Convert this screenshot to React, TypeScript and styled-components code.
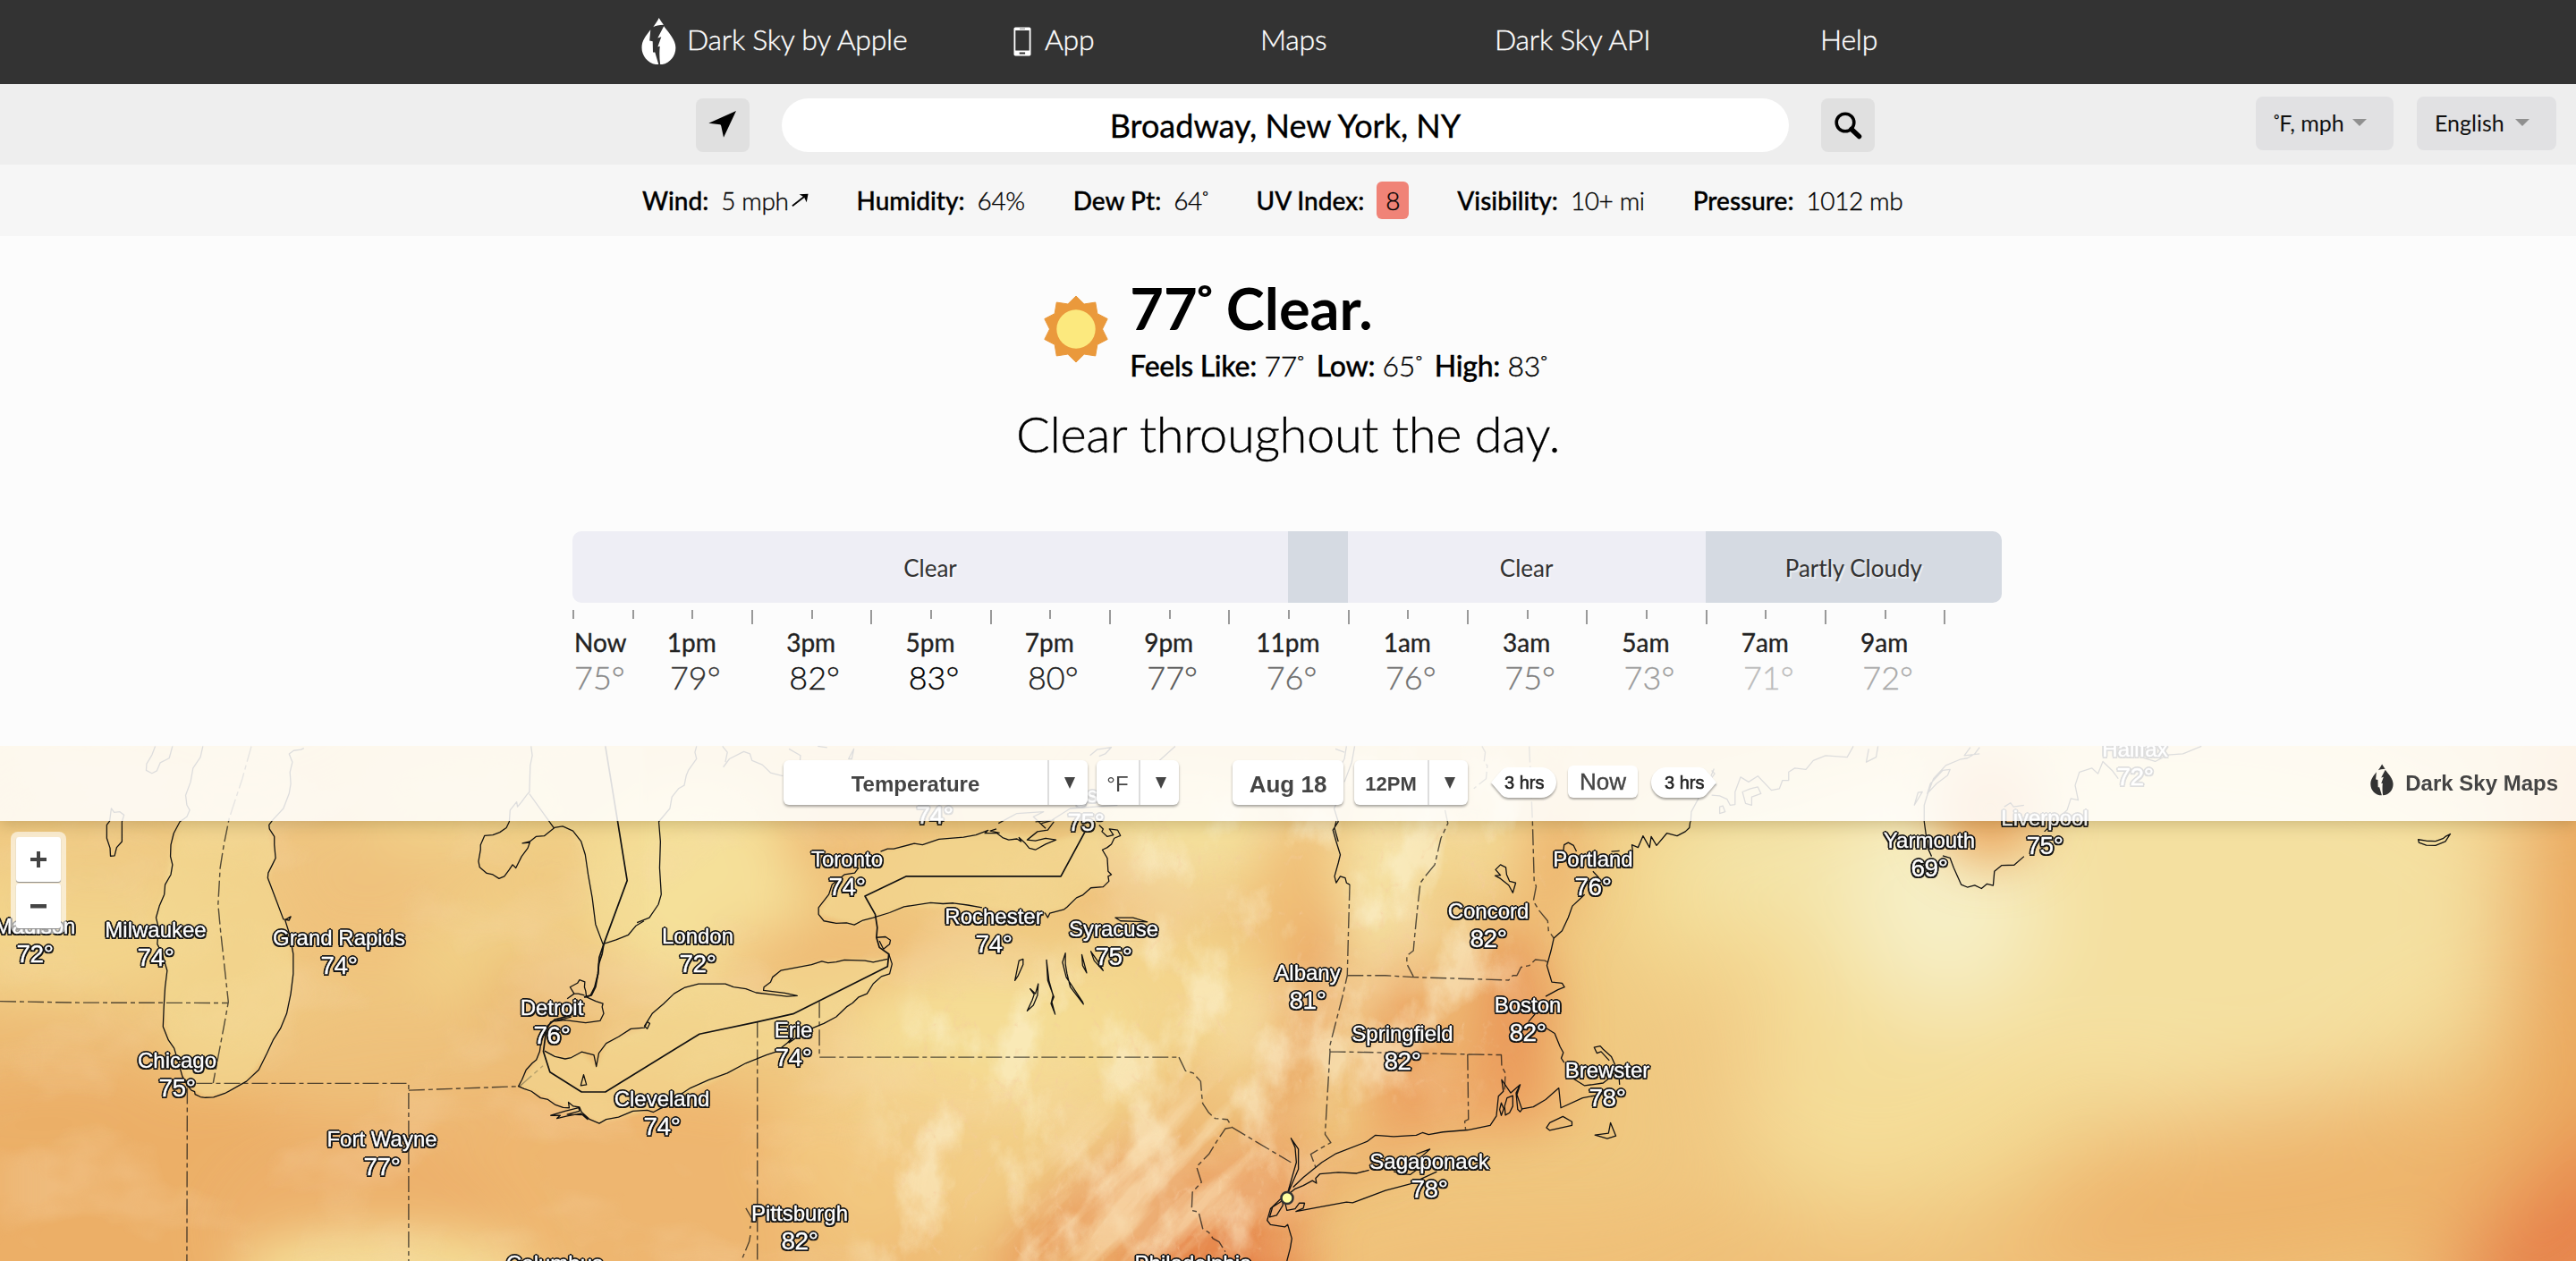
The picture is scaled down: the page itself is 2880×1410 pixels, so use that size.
import React from "react";
import styled, { createGlobalStyle, css } from "styled-components";

const GlobalStyle = createGlobalStyle`
  html, body { margin: 0; padding: 0; }
  body {
    width: 2880px;
    height: 1410px;
    overflow: hidden;
    background: #fcfcfc;
    color: #000;
    font-family: Lato, "Liberation Sans", sans-serif;
  }
  *, *::before, *::after { box-sizing: border-box; }
`;

const Page = styled.div`
  display: flex;
  flex-direction: column;
  width: 2880px;
  height: 1410px;
  overflow: hidden;
`;

/* Heavier rendering for the thin Lato cuts */
const crisp = css`
  -webkit-text-stroke: 0.350px currentColor;
`;

const Degree = styled.span`
  margin-left: -0.070em;
  margin-right: -0.080em;
`;

/* ---------- Navigation ---------- */

const Nav = styled.nav`
  display: grid;
  grid-template-columns: 416px 276px 262px 364px auto;
  flex: none;
  height: 94px;
  padding-left: 717px;
  background: #333;
`;

const NavLink = styled.a<{ $gap?: number }>`
  display: flex;
  align-items: center;
  gap: ${(p) => p.$gap ?? 0}px;
  height: 87px;
  color: #fff;
  font-size: 32px;
  font-weight: 300;
  letter-spacing: -0.250px;
  white-space: nowrap;
  ${crisp}

  svg { flex: none; margin-top: 5px; }
`;

const DropLogo = ({ width, height, color }: { width: number; height: number; color: string }) => (
  <svg width={width} height={height} viewBox="0 0 39 52.5" fill={color}>
    <path d="M19.7 0C18 3.600 15.500 7 13.300 10.300C15.500 8.800 20 8 25 7.700C22.600 4.600 20.800 2 19.700 0Z" />
    <path d="M10.300 13.200C5 20 .5 25.500 .5 33.200C.5 43.500 8.700 52.300 19.400 52.300L15.300 38.500L13 38.500L12.700 26.200L9.200 25.500Z" />
    <path d="M25.200 9.300L18.300 22.600L22.300 21.300L18.400 32.200L20.800 31.700C20 38 20.200 45 21.200 52.300C31 51.600 38.400 43.400 38.400 33.200C38.400 25 31 17 25.200 9.300Z" />
  </svg>
);

const PhoneIcon = () => (
  <svg width="20" height="33" viewBox="0 0 20 33">
    <rect x="0.500" y="0.500" width="19" height="32" rx="1.800" fill="#fff" />
    <rect x="2.300" y="4" width="15.400" height="22.500" fill="#333" />
    <rect x="7" y="1.700" width="6" height="0.900" fill="#777" />
    <rect x="6.700" y="28.500" width="6.400" height="2" fill="#333" />
  </svg>
);

/* ---------- Search bar ---------- */

const SearchRow = styled.div`
  display: flex;
  flex: none;
  gap: 36px;
  height: 90px;
  padding: 16px 22px 0 778px;
  background: #eee;
`;

const IconButton = styled.button`
  flex: none;
  width: 60px;
  height: 60px;
  padding: 0;
  border: 0;
  border-radius: 8px;
  background: #e0e0e0;
`;

const SearchField = styled.div`
  flex: none;
  width: 1126px;
  height: 60px;
  border-radius: 30px;
  background: #fff;
  font-size: 36px;
  line-height: 60px;
  text-align: center;
  ${crisp}
`;

const Selects = styled.div`
  display: flex;
  gap: 26px;
  margin: -2px 0 0 auto;
`;

const Select = styled.div<{ $width: number }>`
  display: flex;
  align-items: center;
  width: ${(p) => p.$width}px;
  height: 60px;
  padding: 0 30px 2px 20px;
  border-radius: 8px;
  background: #e1e1e3;
  color: #111;
  font-size: 25px;
  justify-content: space-between;
  white-space: nowrap;
`;

const Caret = styled.span`
  border: 8px solid transparent;
  border-top-color: #909090;
  border-bottom-width: 0;
`;

/* ---------- Current details ---------- */

const Details = styled.div`
  display: flex;
  flex: none;
  align-items: center;
  gap: 54px;
  height: 80px;
  padding-left: 718px;
  background: #f6f6f6;
  font-size: 28px;
  white-space: nowrap;
  ${crisp}
`;

const Detail = styled.div`
  display: flex;
  align-items: center;
  gap: 14px;
`;

const Label = styled.span`
  font-weight: 500;
`;

const Value = styled.span`
  display: flex;
  align-items: center;
  gap: 3px;
  font-weight: 300;
  letter-spacing: -0.400px;
`;

const UvBadge = styled.span`
  width: 36px;
  height: 42px;
  border-radius: 6px;
  background: #f08377;
  font-weight: 300;
  line-height: 42px;
  text-align: center;
`;

/* ---------- Summary ---------- */

const Summary = styled.section`
  display: flex;
  flex-direction: column;
  align-items: center;
  flex: none;
  height: 330px;
  padding-top: 40px;
`;

const Current = styled.div`
  display: flex;
  gap: 22px;
  height: 140px;
  padding-left: 15px;

  svg { margin-top: 26px; }
`;

const Temperature = styled.h1`
  margin: 0;
  font-size: 65px;
  font-weight: 700;
  line-height: 80px;
  white-space: nowrap;
`;

const Feels = styled.div`
  display: flex;
  gap: 14px;
  font-size: 32px;
  line-height: 40px;
  margin-top: 5px;
  font-weight: 300;
  letter-spacing: -0.300px;
  white-space: nowrap;
  ${crisp}
`;

const Sentence = styled.p`
  margin: 0;
  font-size: 56px;
  font-weight: 300;
  line-height: 82px;
  letter-spacing: -0.370px;
  white-space: nowrap;
  ${crisp}
`;

/* ---------- Timeline ---------- */

const Timeline = styled.section`
  flex: none;
  width: 1600px;
  height: 240px;
  margin-left: 640px;
`;

const Segments = styled.div`
  display: flex;
  width: 1598px;
  height: 80px;
  border-radius: 10px;
  overflow: hidden;
`;

const Segment = styled.div<{ $hours: number; $cloudy?: boolean }>`
  flex: ${(p) => p.$hours} 0 0;
  background: ${(p) => (p.$cloudy ? "#d5dae2" : "#eeeef5")};
  color: #333;
  font-size: 26px;
  line-height: 82px;
  text-align: center;
  text-shadow: 2px 2px 0 rgba(255, 255, 255, 0.5);
`;

const Ticks = styled.div`
  display: flex;
  height: 24px;
  padding-top: 8px;
`;

const Tick = styled.div<{ $major: boolean }>`
  flex: 1 0 0;
  height: ${(p) => (p.$major ? 16 : 10)}px;
  border-left: 2px solid #999;
`;

const Hours = styled.div`
  display: grid;
  grid-template-columns: 66.670px repeat(11, 133.330px);
  ${crisp}
`;

const Hour = styled.div<{ $first: boolean }>`
  display: flex;
  flex-direction: column;
  align-items: center;
  ${(p) => p.$first && css`align-items: flex-start; padding-left: 2px; white-space: nowrap;`}
`;

const HourName = styled.span`
  color: #222;
  font-size: 28px;
  line-height: 40px;
`;

const HourTemp = styled.span<{ $color: string; $first: boolean }>`
  padding-left: ${(p) => (p.$first ? 0 : 8)}px;
  color: ${(p) => p.$color};
  font-size: 36px;
  font-weight: 300;
  line-height: 38px;
`;

const hours: [string, number, string][] = [
  ["Now", 75, "#888"],
  ["1pm", 79, "#333"],
  ["3pm", 82, "#111"],
  ["5pm", 83, "#000"],
  ["7pm", 80, "#222"],
  ["9pm", 77, "#555"],
  ["11pm", 76, "#6a6a6a"],
  ["1am", 76, "#707070"],
  ["3am", 75, "#7c7c7c"],
  ["5am", 73, "#9c9c9c"],
  ["7am", 71, "#bbb"],
  ["9am", 72, "#aaa"],
];

/* ---------- Map ---------- */

const MapFrame = styled.section`
  position: relative;
  flex: none;
  height: 576px;
  overflow: hidden;
  background: #f0c981;
  font-family: "Liberation Sans", Arial, sans-serif;
`;

const MapCanvas = styled.svg`
  display: block;
  width: 2880px;
  height: 576px;
`;

const Toolbar = styled.div`
  position: absolute;
  inset: 0 0 auto;
  display: flex;
  align-items: flex-start;
  height: 84px;
  padding: 16px 20px 0 876px;
  background: rgba(255, 255, 255, 0.86);
  box-shadow: 0 4px 16px rgba(90, 70, 20, 0.25);
  color: #444;
  white-space: nowrap;
`;

const Control = styled.div<{ $space: number }>`
  display: flex;
  flex: none;
  height: 50px;
  margin-right: ${(p) => p.$space}px;
  border-radius: 6px;
  background: #fff;
  box-shadow: 0 2px 3px rgba(0, 0, 0, 0.35);
`;

const ControlText = styled.span<{ $width: number; $size: number; $bold?: boolean }>`
  width: ${(p) => p.$width}px;
  padding-top: 1px;
  font-size: ${(p) => p.$size}px;
  font-weight: ${(p) => (p.$bold ? 700 : 400)};
  line-height: 52px;
  text-align: center;
`;

const ControlArrow = styled.span`
  display: flex;
  align-items: center;
  justify-content: center;
  width: 45px;
  border-left: 2px solid #ddd;
  padding-left: 3px;

  &::after {
    content: "";
    border: 6.500px solid transparent;
    border-top: 13px solid #444;
    border-bottom-width: 0;
  }
`;

const Step = styled.div<{ $back?: boolean; $space: number }>`
  flex: none;
  width: 74px;
  height: 34px;
  margin: 8px ${(p) => p.$space}px 0 0;
  filter: drop-shadow(0 2px 1px rgba(0, 0, 0, 0.35));

  span {
    display: block;
    height: 34px;
    padding-left: ${(p) => (p.$back ? 15 : 16)}px;
    background: #fff;
    color: #222;
    font-size: 20px;
    line-height: 35px;
    -webkit-text-stroke: 0.600px #222;
    clip-path: ${(p) =>
      p.$back
        ? 'path("M0 17L12 3Q15 0 19 0H56A17 17 0 0 1 56 34H19Q15 34 12 31Z")'
        : 'path("M74 17L62 3Q59 0 55 0H18A17 17 0 0 0 18 34H55Q59 34 62 31Z")'};
  }
`;

const NowButton = styled.div`
  flex: none;
  width: 78px;
  height: 36px;
  margin: 6px 14px 0 0;
  border-radius: 6px;
  background: #fff;
  box-shadow: 0 2px 2px rgba(0, 0, 0, 0.3);
  font-size: 26px;
  line-height: 36px;
  text-align: center;
  -webkit-text-stroke: 0.400px #444;
`;

const Brand = styled.div`
  display: flex;
  align-items: center;
  gap: 13px;
  height: 52px;
  margin-left: auto;
  font-size: 24px;
  font-weight: 700;

  svg { margin-top: -8px; }
`;

const ZoomControl = styled.div`
  position: absolute;
  left: 12px;
  top: 96px;
  display: flex;
  flex-direction: column;
  gap: 2px;
  padding: 6px;
  border-radius: 8px;
  background: rgba(255, 255, 255, 0.6);
`;

const ZoomButton = styled.div`
  display: flex;
  align-items: center;
  justify-content: center;
  width: 50px;
  height: 50px;
  border-radius: 3px;
  background: #fff;
  box-shadow: 0 1px 1px #888;
`;

const City = styled.div<{ $x: number; $y: number }>`
  position: absolute;
  left: ${(p) => p.$x}px;
  top: ${(p) => p.$y}px;
  transform: translate(-50%, -15px);
  display: flex;
  flex-direction: column;
  align-items: center;
  color: #fff;
  font-size: 24px;
  line-height: 30px;
  white-space: nowrap;
  -webkit-text-stroke: 0.350px #fff;
  text-shadow:
    2px 0 0 #151515, -2px 0 0 #151515, 0 2px 0 #151515, 0 -2px 0 #151515,
    1.500px 1.500px 0 #151515, -1.500px 1.500px 0 #151515,
    1.500px -1.500px 0 #151515, -1.500px -1.500px 0 #151515,
    0 0 2px #151515;
`;

const CityName = styled.span`
  height: 30px;
`;

const CityTemp = styled.span`
  font-size: 28px;
  line-height: 32px;
  letter-spacing: -0.400px;
`;

const cities: [string, number | null, number, number][] = [
  ["Madison", 72, 39, 202],
  ["Milwaukee", 74, 174, 206],
  ["Grand Rapids", 74, 379, 215],
  ["Chicago", 75, 198, 352],
  ["Fort Wayne", 77, 427, 440],
  ["Detroit", 76, 617, 293],
  ["Cleveland", 74, 740, 395],
  ["London", 72, 780, 213],
  ["Toronto", 74, 947, 127],
  ["", 74, 1045, 47],
  ["Kingston", 75, 1214, 55],
  ["Erie", 74, 887, 318],
  ["Rochester", 74, 1111, 191],
  ["Syracuse", 75, 1245, 205],
  ["Pittsburgh", 82, 894, 523],
  ["Columbus", null, 620, 579],
  ["Philadelphia", null, 1334, 579],
  ["Albany", 81, 1462, 254],
  ["Springfield", 82, 1568, 322],
  ["Concord", 82, 1664, 185],
  ["Portland", 76, 1781, 127],
  ["Boston", 82, 1708, 290],
  ["Brewster", 78, 1797, 363],
  ["Sagaponack", 78, 1598, 465],
  ["Yarmouth", 69, 2157, 106],
  ["Liverpool", 75, 2286, 81],
  ["Halifax", 72, 2387, 4],
];

/* Temperature field: centre, radii, colour, opacity, rotation */
type Blob = [number, number, number, number, string, number, number?];

const landField: Blob[] = [
  [100, 560, 480, 190, "#ebaa63", 0.85],
  [650, 540, 420, 170, "#edb16c", 0.8],
  [430, 590, 170, 46, "#f6e49d", 0.9],
  [30, 350, 160, 60, "#ebae69", 0.55],
  [70, 200, 150, 80, "#f3da92", 0.6],
  [120, 120, 120, 60, "#f0cb84", 0.7],
  [440, 370, 160, 80, "#edb976", 0.5],
  [420, 120, 150, 60, "#efc27e", 0.6],
  [400, 200, 90, 60, "#efbb77", 0.5],
  [560, 230, 100, 60, "#f2d38b", 0.6],
  [530, 60, 130, 60, "#f1d78e", 0.7],
  [780, 150, 120, 120, "#f5e29b", 0.9],
  [940, 110, 80, 50, "#eeb873", 0.6],
  [930, 230, 130, 36, "#eeb570", 0.7],
  [1250, 150, 70, 60, "#efbb76", 0.6],
  [600, 290, 70, 60, "#eab06c", 0.55],
  [1110, 330, 170, 90, "#f6df98", 0.85],
  [1010, 450, 150, 90, "#f3cf88", 0.7],
  [1240, 400, 110, 50, "#f3d58e", 0.6],
  [1330, 90, 110, 70, "#f5e3a0", 0.85],
  [1290, 270, 110, 70, "#f5da92", 0.7],
  [1400, 320, 45, 60, "#f6e09c", 0.8],
  [1440, 170, 40, 90, "#efb872", 0.7],
  [1545, 140, 40, 140, "#f6e6a8", 0.9],
  [1650, 90, 60, 70, "#f4dc98", 0.8],
  [1735, 130, 36, 70, "#ecac66", 0.7],
  [1450, 340, 22, 170, "#e78f50", 0.85, 14],
  [1570, 340, 40, 110, "#e99556", 0.75],
  [1690, 310, 50, 110, "#e99254", 0.85],
  [1640, 400, 120, 40, "#ec9f60", 0.7],
  [1370, 510, 100, 60, "#e88e50", 0.85],
  [1190, 540, 110, 36, "#e78d4f", 0.8, -40],
  [1290, 430, 110, 16, "#eb9d60", 0.7, -36],
  [1350, 590, 120, 50, "#e57f47", 0.9],
  [1500, 470, 80, 14, "#ea965a", 0.75, -12],
  [950, 560, 70, 30, "#f1cc84", 0.6],
  [2225, 70, 60, 60, "#eaa862", 1],
];

const oceanField: Blob[] = [
  [2080, 260, 200, 260, "#f3dd96", 0.85],
  [1900, 160, 100, 110, "#f4df98", 0.9],
  [2420, 180, 430, 230, "#f4e0a0", 1],
  [2110, 390, 210, 120, "#f4dd98", 0.9],
  [1925, 360, 40, 150, "#efc07c", 0.75],
  [2170, 170, 100, 130, "#f5f0ca", 0.95, -12],
  [1960, 110, 90, 60, "#f3eab5", 0.8],
  [1760, 590, 380, 70, "#efb972", 0.7],
  [2150, 590, 320, 60, "#efbd76", 0.8],
  [2580, 500, 330, 110, "#edb36a", 0.9, -8],
  [2910, 240, 110, 300, "#eaa65c", 0.95],
  [2870, 560, 160, 80, "#e57d46", 1, -40],
];

const renderBlob = ([x, y, rx, ry, fill, opacity, turn]: Blob, i: number) => (
  <ellipse
    key={i}
    cx={x}
    cy={y}
    rx={rx}
    ry={ry}
    fill={fill}
    opacity={opacity}
    transform={`rotate(${turn ?? 0} ${x} ${y})`}
  />
);

/* Outlines are stored per map tile; each tile is a 1568-unit square grid. */
interface Tile {
  x: number;
  width: number;
  coast: string;
  border?: string;
  states?: string;
  water?: string;
}

const tiles: Tile[] = [
  {
    x: 0,
    width: 720,
    water:
      "M494 12L464 120L462 205L438 240L415 345L402 430L380 530L383 610L407 690L399 800L410 900L436 975L458 1040L500 1074L548 1061L600 1025L650 940L698 820L714 700L705 580L652 410L671 350L656 262L690 200L708 125L712 60L740 12ZM1293 12L1289 156L1348 258L1395 268L1425 340L1450 550L1468 610L1568 540V12Z",
    coast:
      "M271 200L278 212L292 210L302 220L297 240L297 300L284 318L279 343L269 344L268 320L260 290L260 250L267 238ZM378 12L370 38L357 65L356 85L370 94L382 86L390 62L412 48L420 12M494 12L488 45L470 78L464 120L452 160L455 190L462 205L455 225L438 240L423 275L416 310L415 345L420 370L416 400L402 430L400 460L388 495L380 530L386 560L383 610L395 640L407 690L402 740L399 800L397 860L410 900L424 925L436 975L444 1010L458 1040L466 1052L474 1056L475 1064L488 1072L500 1074L520 1073L548 1061L600 1025L630 990L650 940L665 900L683 865L698 820L708 760L714 700L714 640L705 580L694 537L708 527L704 538L690 535L675 485L652 410L653 395L664 368L671 350L668 310L668 285L656 262L655 250L664 235L690 200L704 155L708 125L706 90L712 60L704 35L715 25L733 22L740 18M1293 12L1296 40L1291 70L1289 150L1282 160L1270 180L1260 195L1258 180L1242 205L1240 240L1233 258L1217 272L1200 280L1180 282L1170 310L1170 325L1165 360L1168 378L1185 396L1200 400L1215 412L1228 405L1240 385L1248 370L1256 380L1270 345L1285 320L1290 303L1272 305L1290 300L1305 285L1325 283L1350 258L1370 254L1395 268L1415 300L1425 340L1432 400L1442 470L1450 550L1468 610L1500 597L1530 582L1548 555L1568 540M1289 156L1348 258",
    border: "M1474 12L1504 240L1527 418L1470 610L1466 640L1458 670L1456 700L1450 740L1440 765L1422 770",
    states:
      "M612 12L590 110L558 230L545 310L536 380L531 490L537 570L556 785L545 860L519 1030M0 783L190 787L556 788M478 1031L995 1031V1568M456 1045L455 1568M995 1052L1265 1040L1322 978",
  },
  {
    x: 540,
    width: 720,
    water:
      "M150 933L200 957L240 936L276 980L300 910L393 863L412 820L465 760L525 730L590 730L665 757L765 766L683 750L725 690L825 662L985 655L990 700L915 770L830 850L715 935L595 1000L450 1098L283 1152L208 1105L86 1040L130 960ZM920 375L842 460L817 520L904 552L1025 497L1215 502L1368 515L1415 505L1480 440L1524 420L1508 325L1500 260L1395 295L1240 268L1110 293L968 330Z",
    coast:
      "M247 765L232 760L222 760L212 740L230 728L235 718L248 724L247 740L250 752L252 770L275 783L292 790L290 800L294 820L285 842L250 848L200 840L175 843M222 760L205 775M520 12L516 30L520 50L500 85L495 100L490 130L476 140L460 165L455 200L428 240L432 300L430 380L434 460L427 490L405 530L375 545M215 830L165 845L155 870L142 900L138 935L130 960L120 970L105 990L95 1020L86 1040L100 1047L118 1055L140 1075L158 1080L175 1095L195 1104L210 1105L208 1088L220 1100L235 1103L240 1118L260 1140L283 1152L300 1140L330 1133L365 1115L400 1112L415 1118L430 1108L450 1098L480 1065L505 1045L550 1020L595 1000L640 970L690 945L715 935L740 910L755 890L745 908L790 870L830 850L860 830L885 800L900 788L915 770L935 760L950 730L970 708L990 700L996 670L988 640M165 1128L200 1115L233 1105L235 1115L205 1125L245 1126L255 1140L238 1122L205 1130L180 1137L188 1128ZM150 933L175 950L200 957L215 953L240 936L270 945L276 980L282 940L300 910L330 890L360 866L393 863L400 845L406 850L400 866L393 858L412 820L440 790L465 760L490 742L525 730L590 730L610 740L640 745L665 757L700 762L740 768L765 766L735 758L683 750L684 740L700 725L705 710L725 690L800 672L825 662L840 667L860 664L880 658L930 660L950 665L985 655M245 1005L252 1035L238 1038ZM958 590L980 588L992 598L990 610L975 625L965 600M915 378L905 395L880 400L850 430L842 460L817 500L817 520L830 540L860 547L885 546L904 552L925 538L950 530L990 515L1025 497L1090 485L1120 488L1145 486L1180 492L1215 500M1368 515L1375 530L1380 517L1415 505L1422 498L1445 470L1460 462L1480 440L1510 437L1524 420L1522 405L1530 400L1522 390L1520 350L1508 325L1520 318L1530 308L1537 290L1552 282L1545 265L1525 262L1535 280L1520 285L1507 270L1510 262L1500 250M968 330L985 322L1000 322L1050 306L1070 310L1110 293L1170 287L1200 280L1230 266L1222 275L1250 274L1265 288L1280 295L1300 292L1310 300L1305 288L1320 305L1330 320L1345 325L1370 308L1395 295L1370 290L1345 298L1325 295L1350 270L1375 265L1390 240M1250 262L1235 268L1258 274M1255 245L1300 215L1365 210L1340 225L1370 260M1345 240L1390 235L1360 245M1385 235L1430 200L1545 190M1478 40L1495 22L1530 15L1515 35L1500 42M1315 655L1305 660L1295 720L1303 705L1315 672ZM1352 730L1345 760L1332 745L1342 762L1337 780L1325 812L1340 795L1350 765ZM1372 658L1375 720L1390 770L1385 785L1393 822L1383 790L1388 765L1378 720ZM1418 637L1411 665L1420 710L1460 785L1462 792L1430 740L1422 700L1418 670ZM1458 642L1470 697L1460 675ZM1480 632L1488 660L1510 690L1497 662ZM585 75L600 50L635 28L650 35L655 55L680 68L700 92L730 102M745 20L773 40L772 55M583 12L595 30L590 60M890 50L903 20L898 50ZM815 12L838 16",
    border:
      "M294 610L283 650L280 700L272 740L262 765L247 770M215 825L175 838L155 860L147 935L163 997L240 1057L298 1057L527 882L668 845L755 821L985 678L988 640L965 620L958 590L960 560L955 520L930 465L1031 405H1407L1465 272",
    states: "M668 845V1568M819 785V952H1694M640 1408L655 1440L650 1470M651 1490L648 1510L632 1558",
  },
  {
    x: 1200,
    width: 720,
    coast:
      "M665 12L660 50L640 95L655 130L650 160L635 200L645 240L632 265L640 300L650 340L645 365L636 405L640 425L650 405L662 410L665 425L673 430M640 238L636 260L645 300M685 12L678 60L660 120M638 20L660 30M1502 240L1500 258L1490 270L1470 283L1445 275L1420 312L1407 285L1403 318L1387 283L1375 318L1360 310L1362 330M1225 330L1218 312L1205 303L1195 310L1193 330M1310 330L1330 328M1265 390L1280 410M1245 460L1215 495L1205 530L1190 570L1170 592L1163 630L1153 675L1165 725L1190 728L1196 740L1180 748L1150 768M1125 820L1108 845M1150 863L1172 880L1185 920L1193 938L1188 955L1195 968M1215 1015L1245 1038L1290 1030L1305 1015M1330 1035L1328 1000L1310 950L1290 928L1283 918L1268 922L1275 940L1285 935L1305 962M1270 1068L1240 1075L1187 1105L1182 1045L1150 1080L1120 1102L1093 1108L1088 1117L1082 1110L1078 1060L1088 1035L1065 1060L1043 1020L1047 1055L1035 1070L1030 1130L1015 1158L960 1172L900 1178L865 1186L850 1180L835 1188L780 1192L735 1188L715 1207L640 1243L605 1270L560 1315L535 1345M1042 1090L1038 1110L1042 1128L1048 1108ZM1070 1068L1056 1075L1050 1100L1052 1127L1062 1120L1070 1100ZM1088 1035L1080 1065L1092 1108M1152 1165L1160 1150L1192 1131L1214 1147L1214 1158L1160 1173ZM1270 1187L1303 1182L1308 1150L1321 1190L1300 1198ZM520 1370L540 1350L560 1340L582 1325L592 1333L590 1318L600 1305L645 1300L690 1303L720 1293M780 1297L800 1305L820 1307L860 1270M835 1245L868 1230L850 1250M885 1298L820 1335L760 1355L680 1392L665 1390L600 1405L542 1418L560 1408L563 1393L550 1393L540 1410L520 1415L515 1390M530 1197L548 1230L548 1290L520 1370L543 1270L540 1225ZM510 1385L485 1405L478 1435L495 1430L510 1400ZM505 1380L480 1410L472 1445L480 1458L515 1465L522 1458L532 1500L528 1530L520 1568M1027 403L1040 402L1028 385L1040 370L1053 378L1055 400L1062 420L1077 425L1070 455L1060 432L1040 412ZM102 530L145 530L180 543L115 540ZM248 12L210 55M1560 80L1550 110L1565 130",
    states:
      "M673 430L670 560L667 705L655 770L624 920L625 935L618 1080L613 1185L627 1210L578 1245L590 1285M995 12L1003 30L1000 60L1008 70L1005 110L975 140M905 205L912 245L895 290L880 370L860 400L845 425L838 500L830 600L828 630L812 645L812 670L828 708M1110 12L1118 240L1122 420L1127 435L1120 480L1135 510L1155 540L1157 570L1170 592M667 705L760 705L828 710L1060 719L1070 705L1080 705L1090 680L1110 675L1125 657L1148 660L1155 665M624 935L960 943L1042 945L1043 980L1052 1000L1050 1050M960 943L962 1140L953 1145L955 1170M257 952L273 993L292 1000L310 1025L313 1070L315 1092L330 1120L345 1137L375 1140L380 1150M385 1163L530 1270M385 1165L370 1168L350 1205L330 1245L300 1283L312 1330L290 1360L288 1415L305 1420L315 1470L330 1482L340 1500L355 1510L370 1540",
  },
  {
    x: 1800,
    width: 1080,
    coast:
      "M131 240L132 210L145 165M165 85L170 95L160 120L170 130M165 160L178 162L190 172L195 190L203 188L203 150L212 105L225 120L240 102L262 145L275 140L280 115L290 115L290 90L300 78L318 82L330 55L350 40L385 45L395 12M215 150L220 185L230 190L230 165L245 155L240 135L228 140ZM178 195L178 215L187 210L183 192ZM420 20L416 60L432 45L435 12M600 15L592 35L580 48L568 52L545 70L525 110L515 160L510 190L510 240L516 320L522 345M600 35L575 40L585 15M540 343L552 350L558 380L570 430L580 438L592 432L603 442L612 428L622 433L624 390L636 372L656 371L672 345M705 270L722 240L742 205L748 170L760 175L755 130L762 90L782 78L792 95L800 58L815 85L825 110M862 45L885 58L905 38L930 35L960 12M552 82L540 85L520 125L515 155L530 125L548 100ZM494 190L500 152L507 150ZM640 195L650 183L655 195L672 190M1312 294L1325 298L1340 299L1352 291L1356 285L1364 277L1356 300L1340 312L1325 311L1313 303Z",
  },
];

const Sun = () => {
  const points = Array.from({ length: 20 }, (_, i) => {
    const r = i % 2 ? 29.5 : 37;
    const a = (i * Math.PI) / 10;
    return `${38 + r * Math.sin(a)},${38 - r * Math.cos(a)}`;
  }).join(" ");
  return (
    <svg width="76" height="76" viewBox="0 0 76 76">
      <polygon points={points} fill="#ea993c" stroke="#ea993c" strokeLinejoin="round" />
      <circle cx="38" cy="38" r="21.700" fill="#fce97e" />
    </svg>
  );
};

const WeatherMap = () => (
  <MapCanvas viewBox="0 0 2880 576">
    <defs>
      <filter id="soft" x="-20%" y="-60%" width="140%" height="220%">
        <feGaussianBlur stdDeviation="28" />
      </filter>
      <filter id="softer" x="-40%" y="-80%" width="180%" height="260%">
        <feGaussianBlur stdDeviation="54" />
      </filter>
      <filter id="edge" x="-20%" y="-20%" width="140%" height="140%">
        <feGaussianBlur stdDeviation="6" />
      </filter>
      <filter id="ridgesDark" x="0" y="0" width="100%" height="100%">
        <feTurbulence type="turbulence" baseFrequency="0.022 0.016" numOctaves="5" seed="11" />
        <feColorMatrix values="0 0 0 0 0.910  0 0 0 0 0.600  0 0 0 0 0.350  -7 0 0 0 1" />
      </filter>
      <filter id="ridgesLight" x="0" y="0" width="100%" height="100%">
        <feTurbulence type="fractalNoise" baseFrequency="0.016 0.010" numOctaves="6" seed="4" />
        <feColorMatrix values="0 0 0 0 0.980  0 0 0 0 0.920  0 0 0 0 0.690  0 4 0 0 -1.950" />
      </filter>
      <filter id="folds" x="0" y="0" width="100%" height="100%">
        <feTurbulence type="fractalNoise" baseFrequency="0.006 0.030" numOctaves="5" seed="21" />
        <feColorMatrix values="0 0 0 0 0.965  0 0 0 0 0.790  0 0 0 0 0.500  0 4 0 0 -1.950" />
      </filter>
      <filter id="haze" x="0" y="0" width="100%" height="100%">
        <feTurbulence type="fractalNoise" baseFrequency="0.006 0.009" numOctaves="4" seed="8" />
        <feColorMatrix values="0 0 0 0 0.925  0 0 0 0 0.680  0 0 0 0 0.410  4 0 0 0 -1.900" />
      </filter>
      <filter id="maskBlur" x="-30%" y="-30%" width="160%" height="160%">
        <feGaussianBlur stdDeviation="24" />
      </filter>
      <mask id="mountains">
        <path
          d="M1010 290L1230 240L1290 60L1500 10L1790 10L1700 200L1660 380L1480 420L1400 600L960 600L980 470Z"
          fill="#fff"
          filter="url(#maskBlur)"
        />
      </mask>
      <mask id="valleys">
        <path
          d="M1090 600L1180 440L1320 380L1420 400L1400 500L1330 600Z"
          fill="#fff"
          filter="url(#maskBlur)"
        />
      </mask>
      <mask id="plains">
        <path d="M0 0H1720L1600 420L1400 600H0Z" fill="#fff" filter="url(#maskBlur)" />
      </mask>
    </defs>

    <rect width="2880" height="576" fill="#f0c981" />
    <g filter="url(#softer)">{oceanField.map(renderBlob)}</g>
    <g filter="url(#soft)">{landField.map(renderBlob)}</g>
    <g mask="url(#plains)">
      <rect width="1800" height="576" filter="url(#haze)" opacity="0.300" />
    </g>
    <g mask="url(#mountains)">
      <rect x="900" width="900" height="576" filter="url(#ridgesLight)" opacity="0.500" />
      <rect x="900" width="900" height="576" filter="url(#ridgesDark)" opacity="0.450" />
    </g>
    <g mask="url(#valleys)">
      <g transform="rotate(-48 1250 490)">
        <rect x="1000" y="250" width="520" height="480" filter="url(#folds)" opacity="0.550" />
      </g>
    </g>

    {tiles.map((tile) => (
      <g
        key={tile.x}
        transform={`translate(${tile.x} -4) scale(${tile.width / 1568} ${580 / 1568})`}
        fill="none"
        stroke="#111"
        strokeLinejoin="round"
      >
        {tile.water && <path d={tile.water} fill="#f3db94" stroke="none" opacity="0.600" filter="url(#edge)" />}
        <path d={tile.coast} strokeWidth="1.300" vectorEffect="non-scaling-stroke" />
        {tile.border && <path d={tile.border} strokeWidth="1.700" vectorEffect="non-scaling-stroke" />}
        {tile.states && (
          <path
            d={tile.states}
            strokeWidth="1.400"
            strokeDasharray="18 4 5 4"
            opacity="0.700"
            vectorEffect="non-scaling-stroke"
          />
        )}
      </g>
    ))}
    <circle cx="1439" cy="505.500" r="6.500" fill="#ffffa0" stroke="#333" strokeWidth="2.500" />
  </MapCanvas>
);

export default function App() {
  return (
    <Page>
      <GlobalStyle />
      <Nav>
        <NavLink $gap={12}>
          <DropLogo width={39} height={52.5} color="#fff" />
          Dark Sky by Apple
        </NavLink>
        <NavLink $gap={15}>
          <PhoneIcon />
          App
        </NavLink>
        <NavLink>Maps</NavLink>
        <NavLink>Dark Sky API</NavLink>
        <NavLink>Help</NavLink>
      </Nav>

      <SearchRow>
        <IconButton aria-label="Locate">
          <svg width="60" height="60">
            <path d="M45 14L14.300 27.700L27 29.300Q28 29.500 28.300 31L31 43.700Z" />
          </svg>
        </IconButton>
        <SearchField>Broadway, New York, NY</SearchField>
        <IconButton aria-label="Search">
          <svg width="60" height="60" fill="none" stroke="#000">
            <circle cx="27" cy="27" r="9.800" strokeWidth="3.600" />
            <path d="M34 34.500L42.500 42.500" strokeWidth="5.500" strokeLinecap="round" />
          </svg>
        </IconButton>
        <Selects>
          <Select $width={154}>
            <span><Degree>˚</Degree>F, mph</span>
            <Caret />
          </Select>
          <Select $width={156}>
            <span>English</span>
            <Caret />
          </Select>
        </Selects>
      </SearchRow>

      <Details>
        <Detail>
          <Label>Wind:</Label>
          <Value>
            5 mph
            <svg width="19" height="16" viewBox="0 0 21 17">
              <path d="M1 15.500L15.500 4" stroke="#000" strokeWidth="2" />
              <path d="M9.500 1L20.500 .5L18.500 11L15.500 4.500Z" />
            </svg>
          </Value>
        </Detail>
        <Detail><Label>Humidity:</Label><Value>64%</Value></Detail>
        <Detail><Label>Dew Pt:</Label><Value><span>64<Degree>˚</Degree></span></Value></Detail>
        <Detail><Label>UV Index:</Label><UvBadge>8</UvBadge></Detail>
        <Detail><Label>Visibility:</Label><Value>10+ mi</Value></Detail>
        <Detail><Label>Pressure:</Label><Value>1012 mb</Value></Detail>
      </Details>

      <Summary>
        <Current>
          <Sun />
          <div>
            <Temperature>77<Degree>˚</Degree> Clear.</Temperature>
            <Feels>
              <span><Label>Feels Like:</Label> 77<Degree>˚</Degree></span>
              <span><Label>Low:</Label> 65<Degree>˚</Degree></span>
              <span><Label>High:</Label> 83<Degree>˚</Degree></span>
            </Feels>
          </div>
        </Current>
        <Sentence>Clear throughout the day.</Sentence>
      </Summary>

      <Timeline>
        <Segments>
          <Segment $hours={12}>Clear</Segment>
          <Segment $hours={1} $cloudy />
          <Segment $hours={6}>Clear</Segment>
          <Segment $hours={4.97} $cloudy>Partly Cloudy</Segment>
        </Segments>
        <Ticks>
          {Array.from({ length: 24 }, (_, i) => (
            <Tick key={i} $major={i > 1 && i % 2 === 1} />
          ))}
        </Ticks>
        <Hours>
          {hours.map(([name, temp, color], i) => (
            <Hour key={name} $first={i === 0}>
              <HourName>{name}</HourName>
              <HourTemp $color={color} $first={i === 0}>{temp}°</HourTemp>
            </Hour>
          ))}
        </Hours>
      </Timeline>

      <MapFrame>
        <WeatherMap />
        {cities.map(([name, temp, x, y]) => (
          <City key={name + x} $x={x} $y={y}>
            <CityName>{name}</CityName>
            {temp !== null && <CityTemp>{temp}°</CityTemp>}
          </City>
        ))}
        <Toolbar>
          <Control $space={10}>
            <ControlText $width={295} $size={24} $bold>Temperature</ControlText>
            <ControlArrow />
          </Control>
          <Control $space={60}>
            <ControlText $width={47} $size={24}>°F</ControlText>
            <ControlArrow />
          </Control>
          <Control $space={12}>
            <ControlText $width={124} $size={26} $bold>Aug 18</ControlText>
          </Control>
          <Control $space={26}>
            <ControlText $width={82} $size={22} $bold>12PM</ControlText>
            <ControlArrow />
          </Control>
          <Step $back $space={12}><span>3 hrs</span></Step>
          <NowButton>Now</NowButton>
          <Step $space={0}><span>3 hrs</span></Step>
          <Brand>
            <DropLogo width={26} height={36} color="#333" />
            Dark Sky Maps
          </Brand>
        </Toolbar>
        <ZoomControl>
          <ZoomButton>
            <svg width="20" height="20"><path d="M8 1h4v7h7v4h-7v7h-4v-7h-7v-4h7z" fill="#444" /></svg>
          </ZoomButton>
          <ZoomButton>
            <svg width="20" height="20"><path d="M1 8h18v4.500h-18z" fill="#444" /></svg>
          </ZoomButton>
        </ZoomControl>
      </MapFrame>
    </Page>
  );
}
